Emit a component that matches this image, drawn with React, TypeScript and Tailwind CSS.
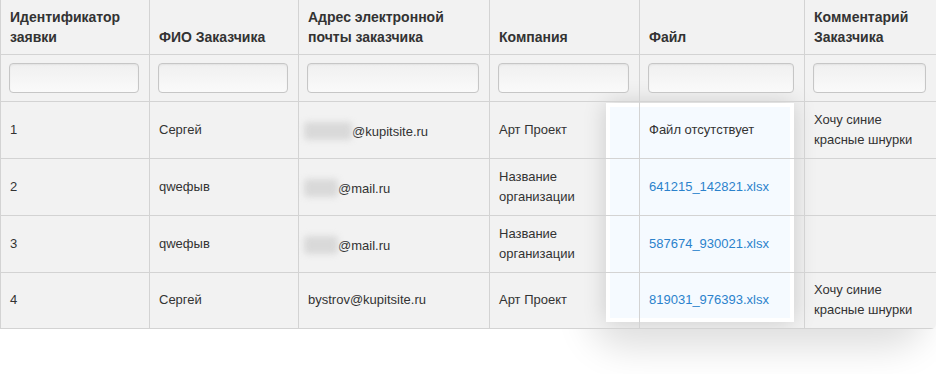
import { Fragment } from 'react'

type Order = {
  id: number
  name: string
  emailHidden?: number
  email: string
  company: string
  file?: string
  comment?: string
}

const orders: Order[] = [
  { id: 1, name: 'Сергей', emailHidden: 48, email: '@kupitsite.ru', company: 'Арт Проект', comment: 'Хочу синие красные шнурки' },
  { id: 2, name: 'qweфыв', emailHidden: 34, email: '@mail.ru', company: 'Название организации', file: '641215_142821.xlsx' },
  { id: 3, name: 'qweфыв', emailHidden: 34, email: '@mail.ru', company: 'Название организации', file: '587674_930021.xlsx' },
  { id: 4, name: 'Сергей', email: 'bystrov@kupitsite.ru', company: 'Арт Проект', file: '819031_976393.xlsx', comment: 'Хочу синие красные шнурки' },
]

const columns = [
  { title: 'Идентификатор заявки', width: 149 },
  { title: 'ФИО Заказчика', width: 149 },
  { title: 'Адрес электронной почты заказчика', width: 191 },
  { title: 'Компания', width: 150 },
  { title: 'Файл', width: 165 },
  { title: 'Комментарий Заказчика', width: 132 },
]

const cell = 'border border-[#d3d3d3] px-[9px] align-middle'

function FilterInput() {
  return (
    <div className="h-[30px] w-full rounded-[4px] border border-[#c6c6c6] bg-gradient-to-b from-[#f0f0f0] to-[#fafafa] shadow-[inset_0_1px_2px_rgba(0,0,0,0.06)]" />
  )
}

function OrdersTable() {
  return (
    <table className="relative z-10 w-[936px] table-fixed border-collapse text-[13px] leading-5 text-[#333]">
      <colgroup>
        {columns.map((c) => (
          <col key={c.title} style={{ width: c.width }} />
        ))}
      </colgroup>
      <thead>
        <tr className="h-[54px]">
          {columns.map((c) => (
            <th
              key={c.title}
              className="border border-t-0 border-[#d3d3d3] px-[9px] pb-[7px] text-left align-bottom text-[14px] font-bold leading-5"
            >
              {c.title}
            </th>
          ))}
        </tr>
        <tr className="h-[47px]">
          {columns.map((c) => (
            <th key={c.title} className="border border-[#d3d3d3] pl-[8px] pr-[10px] align-middle font-normal">
              <FilterInput />
            </th>
          ))}
        </tr>
      </thead>
      <tbody>
        {orders.map((o, i) => (
          <tr key={o.id} className={i === orders.length - 1 ? 'h-[56px]' : 'h-[57px]'}>
            <td className={cell}>{o.id}</td>
            <td className={cell}>{o.name}</td>
            <td className={cell + ' whitespace-nowrap'}>
              {o.emailHidden ? (
                <Fragment>
                  {/* masked part of the address */}
                  <span
                    className="-ml-[4px] inline-block h-[18px] translate-y-[4px] rounded-sm bg-[#d9d9d9] blur-[3px]"
                    style={{ width: o.emailHidden }}
                  />
                  {o.email}
                </Fragment>
              ) : (
                o.email
              )}
            </td>
            <td className={cell}>{o.company}</td>
            <td className={cell}>
              {o.file ? (
                <a href="#" className="text-[#2b82cc]">
                  {o.file}
                </a>
              ) : (
                'Файл отсутствует'
              )}
            </td>
            <td className={cell}>{o.comment}</td>
          </tr>
        ))}
      </tbody>
    </table>
  )
}

export default function App() {
  return (
    <div className="relative h-[374px] w-[936px] overflow-hidden bg-white font-['Liberation_Sans',Arial,sans-serif]">
      {/* soft drop shadow under the right part of the table */}
      <div className="absolute left-[590px] right-[10px] top-[250px] h-[70px] rounded-[40px] bg-[#f2f2f2] shadow-[0_28px_36px_rgba(0,0,0,0.13)]" />
      <div className="relative w-[936px] overflow-hidden rounded-br-[5px] bg-[#f2f2f2]">
        {/* highlighted file column */}
        <div className="absolute left-[606px] top-[103px] z-0 h-[219px] w-[188px] border-[4px] border-white bg-[#f5faff] shadow-[0_0_22px_rgba(0,0,0,0.16)]" />
        <OrdersTable />
      </div>
    </div>
  )
}
